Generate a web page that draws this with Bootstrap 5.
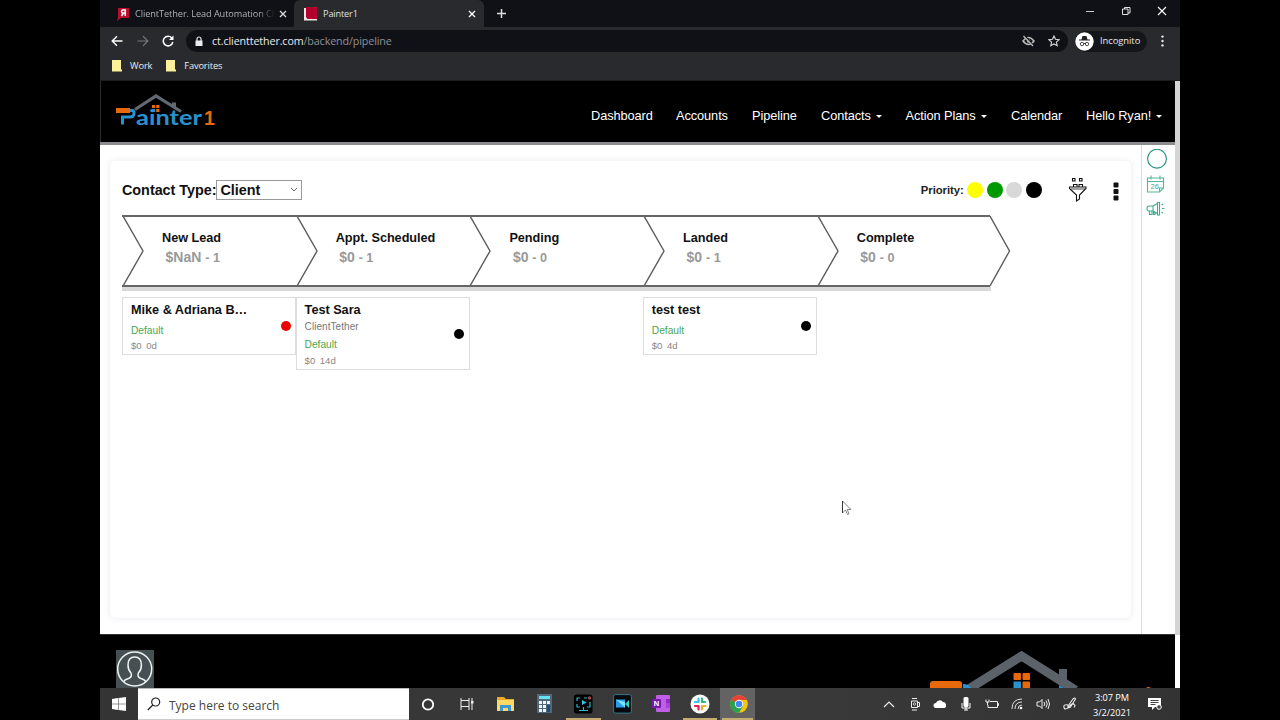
<!DOCTYPE html>
<html lang="en">
<head>
<meta charset="utf-8">
<meta name="viewport" content="width=device-width, initial-scale=1">
<title>Painter1</title>
<link href="https://cdn.jsdelivr.net/npm/bootstrap@5.3.0/dist/css/bootstrap.min.css" rel="stylesheet">
<style>
body{background:#000;height:720px;overflow:hidden;font-family:"Liberation Sans",Arial,sans-serif}
svg{display:block;flex:none}
.screen{width:1080px;height:720px;margin-left:100px}
.seg{font-family:"Open Sans","Noto Sans",sans-serif;color:#e8eaed;white-space:nowrap}
.tabstrip{height:27px;background:#101116;font-size:9.2px}
.tab-one{width:194px;padding-left:17px}
.tab-title{width:146px;letter-spacing:-.08px;color:#aeb1b6;padding-left:6px;-webkit-mask-image:linear-gradient(90deg,#000 88%,transparent)}
.tab-two{width:190px;background:#292a2e;border-radius:6px 6px 0 0;padding-left:10px;color:#dfe1e5;letter-spacing:-.15px}
.toolbar{height:28px;background:#292a2e}
.omnibox{width:882px;height:22px;border-radius:11px;background:#101116;font-size:10.7px;letter-spacing:-.1px;padding:0 8px 0 8px}
.omnibox .path{color:#8f9297}
.incog{width:72px;height:21px;border-radius:11px;background:#15161a;font-size:9.4px;letter-spacing:-.05px}
.marks{height:26px;background:#292a2e;border-bottom:1px solid #1b1c1f;font-size:9.3px;padding-bottom:3px;letter-spacing:-.15px}
.page{height:607px}
.site{width:1075px}
.vscroll{width:5px;height:554px;background:#d5d5d5}
.vscroll-end{width:5px;height:53px;background:#fff}
.topnav{height:61px;background:#000;border-left:1px solid #2a2a2a}
.menu{display:grid;grid-template-columns:85px 76px 69px 84.5px 105.5px 75px 80px;width:575px;color:#fff;font-size:12.8px;letter-spacing:-.09px;padding-top:8px;line-height:18px;white-space:nowrap}
.caret{display:inline-block;border:3px solid transparent;border-top-color:#fff;border-bottom:0;margin-left:5px;vertical-align:2px}
.rule{height:3px;background:#8b8c8f}
.body-area{height:489px;background:#fff}
.main-area{width:1041px;padding:16px 10px 16px 10px}
.panel{height:457px;border-radius:5px;box-shadow:0 0 6px rgba(70,80,140,.13);padding:17px 0 0 12px;background:#fff}
.side{width:34px;border-left:1px solid #d9dfe0;padding:4px 0 0 4px}
.filters{height:24px}
.ctype{font-size:14.4px;font-weight:700;letter-spacing:-.03px;color:#111;white-space:nowrap}
.picker{width:86px;height:20px;border:1px solid #999;padding:0 3px;line-height:18px}
.prio{font-size:11.3px;font-weight:700;letter-spacing:-.05px;width:46px;color:#222;white-space:nowrap}
.dot{width:16px;height:16px;border-radius:50%;margin-right:3.8px}
.stages{margin-top:13px;height:72px}
.stage{width:173.7px;border-top:2px solid #666;border-bottom:2px solid #666}
.stage-text{padding:12px 0 0 18px;white-space:nowrap}
.stage-name{font-size:12.7px;line-height:18px;font-weight:700;color:#111;letter-spacing:-.03px}
.stage-sum{font-size:14px;line-height:20px;font-weight:700;color:#999;padding-left:3.5px}
.stage-sum span{font-size:12.6px}
.under{width:869px;height:4px;background:#d9d9d9}
.deals{margin-top:6px}
.slot{width:173.6px}
.deal{border:1px solid #ddd;padding:3px 4.500px 0 8px;height:58px;white-space:nowrap;width:174px}
.deal.tall{height:73px}
.deal-name{font-size:12.7px;font-weight:700;color:#111;line-height:18px;letter-spacing:-.02px}
.deal-org{font-size:10px;line-height:15px;color:#777;letter-spacing:.06px}
.deal-tag{font-size:10.2px;line-height:16px;color:#4ba64f;margin-top:4px}
.tall .deal-tag{margin-top:1px;line-height:20px}
.tall .deal-sum{line-height:12px}
.deal-sum{font-size:9.6px;line-height:14px;color:#888}
.deal-sum span{margin-left:4.500px}
.flag{width:10px;height:10px;border-radius:50%;margin-bottom:3px}
.foot{height:54px;background:#000;border-top:1px solid #333;padding:15px 0 0 16px}
.taskbar{height:32px;background:linear-gradient(90deg,#333433,#3a3a3a 60%,#333)}
.searchbox{width:271px;height:32px;background:#fff;color:#444;border-bottom:1px solid #ccc;font-size:12px;padding-left:9px;border-top:1px solid #bbb}
.app{width:38.8px;height:32px;display:flex;align-items:center;justify-content:center;flex:none}
.app.open{border-bottom:2px solid #c0a768;padding:2px 3px 0;border-image:linear-gradient(90deg,transparent 8%,#c6ac70 8%,#c6ac70 92%,transparent 92%) 1}
.app.now{background:#636363;width:35px;padding:2px 0 0 2px;margin-left:1px}
.tray-cell{width:25.6px;display:flex;justify-content:center;flex:none;padding-left:1px}
.clock{font-size:9.2px;letter-spacing:-.05px;line-height:15px;text-align:center;width:58px;margin-left:-1px;padding-top:1px;color:#fff}
</style>
</head>
<body>
<div class="screen d-flex flex-column">
  <div class="tabstrip seg d-flex flex-none">
    <div class="tab-one d-flex align-items-center">
      <svg width="12" height="14" viewBox="0 0 12 14"><path d="M1 1h11v10H4l-4 3 1-4z" fill="#b80f2e"/><path d="M8.300 9V3H6a1.500 1.500 0 0 0 0 3h2M6.500 6 4.500 9" stroke="#fff" stroke-width="1.500" fill="none"/></svg>
      <div class="tab-title">ClientTether. Lead Automation CF</div>
      <svg style="margin-left:4px" width="8" height="8" viewBox="0 0 8 8"><path d="m1 1 6 6M7 1 1 7" stroke="#ddd" stroke-width="1.300"/></svg>
    </div>
    <div class="tab-two d-flex align-items-center">
      <svg width="14" height="14" viewBox="0 0 14 14"><path d="M0 1h3v10h10v2.500H0z" fill="#f3e4e6"/><path d="M2 0h11v12H3.500L2 10z" fill="#b3002d"/></svg>
      <span style="margin-left:5px">Painter1</span>
      <svg class="ms-auto" style="margin-right:8px" width="8" height="8" viewBox="0 0 8 8"><path d="m1 1 6 6M7 1 1 7" stroke="#fff" stroke-width="1.400"/></svg>
    </div>
    <svg class="align-self-center" style="margin-left:12px" width="11" height="11" viewBox="0 0 11 11"><path d="M5.500 1v9M1 5.500h9" stroke="#ddd" stroke-width="1.500"/></svg>
    <div class="ms-auto d-flex align-items-center" style="gap:26px;padding-right:13px;padding-bottom:5px">
      <svg width="10" height="10" viewBox="0 0 10 10"><path d="M1 5.500h8" stroke="#ccc"/></svg>
      <svg width="10" height="10" viewBox="0 0 10 10"><path d="M1.500 3h5.500v5.500H1.500zM3.500 3V1.500H9V7H7" stroke="#e2e2e2" fill="none"/></svg>
      <svg width="10" height="10" viewBox="0 0 10 10"><path d="m1 1 8 8M9 1 1 9" stroke="#fff" stroke-width="1.100"/></svg>
    </div>
  </div>
  <div class="toolbar seg d-flex align-items-center">
    <svg style="margin-left:11px" width="12" height="12" viewBox="0 0 12 12"><path d="M11.500 6H1.500M6 1.200 1.200 6 6 10.800" fill="none" stroke="#fff" stroke-width="1.400"/></svg>
    <svg style="margin-left:14px" width="12" height="12" viewBox="0 0 12 12"><path d="M.5 6h10M6 1.200 10.800 6 6 10.800" fill="none" stroke="#77797d" stroke-width="1.200"/></svg>
    <svg style="margin:0 12px 0 13px" width="12" height="12" viewBox="0 0 12 12"><path d="M9.800 3A4.800 4.800 0 1 0 10.800 7" fill="none" stroke="#fff" stroke-width="1.500"/><path d="M11.500.5v4.500H7z" fill="#fff"/></svg>
    <div class="omnibox d-flex align-items-center">
      <svg width="10" height="11" viewBox="0 0 10 11"><path d="M1.500 4.500h7V10h-7z" fill="#e8eaed"/><path d="M3 5V3a2 2 0 0 1 4 0v2" fill="none" stroke="#e8eaed" stroke-width="1.200"/></svg>
      <div style="margin-left:8px">ct.clienttether.com<span class="path">/backend/pipeline</span></div>
      <svg class="ms-auto" width="13" height="12" viewBox="0 0 13 12"><path d="M1 6q5.500-7 11 0-5.500 7-11 0z" fill="none" stroke="#bbb" stroke-width="1.500"/><circle cx="6.500" cy="6" r="1.800" fill="#bbb"/><path d="m2.500 1 9 10" stroke="#101116" stroke-width="2"/><path d="m1.500 1 9.500 10" stroke="#bbb" stroke-width="1.300"/></svg>
      <svg style="margin-left:13px" width="12" height="12" viewBox="0 0 12 12"><path d="m6 1 1.500 3.300 3.600.4-2.700 2.400.8 3.600L6 8.900l-3.200 1.800.8-3.600L.9 4.700l3.600-.4z" fill="none" stroke="#d6d7d9" stroke-width="1.100"/></svg>
    </div>
    <div class="incog d-flex align-items-center" style="margin-left:7px">
      <svg width="19" height="19" viewBox="0 0 19 19"><circle cx="9.500" cy="9.500" r="9.200" fill="#fff"/><path d="M6.500 7.500 7.500 4h4l1 3.500zM4 7.500h11v1H4z" fill="#222"/><circle cx="7" cy="12" r="1.700" fill="none" stroke="#222" stroke-width=".8"/><circle cx="12" cy="12" r="1.700" fill="none" stroke="#222" stroke-width=".8"/><path d="M8.500 11.500h2" stroke="#222" stroke-width=".8"/></svg>
      <span style="margin-left:6px">Incognito</span>
    </div>
    <svg style="margin-left:14px" width="4" height="12" viewBox="0 0 4 12"><g fill="#e8eaed"><circle cx="1.500" cy="1.600" r="1.200"/><circle cx="1.500" cy="6" r="1.200"/><circle cx="1.500" cy="10.400" r="1.200"/></g></svg>
  </div>
  <div class="marks seg d-flex align-items-center">
    <svg style="margin-left:12px" width="11" height="12" viewBox="0 0 11 12"><path d="M0 0h9v9l1 1v1.500H0z" fill="#fdf09a"/></svg>
    <span style="margin-left:7px">Work</span>
    <svg style="margin-left:14px" width="11" height="12" viewBox="0 0 11 12"><path d="M0 0h9v9l1 1v1.500H0z" fill="#fdf09a"/></svg>
    <span style="margin-left:7px">Favorites</span>
  </div>

  <div class="page d-flex">
    <div class="site">
      <nav class="topnav d-flex justify-content-between align-items-center">
        <svg style="margin:-2px 0 0 14px" width="102" height="36" viewBox="0 0 102 36">
          <path d="M20 16.500 41 3l25 15.500" fill="none" stroke="#636970" stroke-width="3.200"/>
          <path d="M57 9.500h4v7l-4-3z" fill="#636970"/>
          <path d="M1 15h14v5H1z" fill="#e8690b"/>
          <path d="M15 17.500h2.500q1.500 0 1.500 2.500 0 4-4 4H7.500v7.500" fill="none" stroke="#2a91d0" stroke-width="3"/>
          <path d="M37 12h3.200v3H37zM41.200 12h3.200v3h-3.200zM41.200 16h3.200v3h-3.200z" fill="#e8690b"/><path d="M37 16h3.200v3H37z" fill="#2a91d0"/>
          <text x="21" y="31.500" textLength="66" lengthAdjust="spacingAndGlyphs" font-family="Lato,sans-serif" font-weight="700" font-size="20.500" fill="#2a91d0">ainter</text>
          <text x="89" y="31.500" font-family="Liberation Sans,sans-serif" font-weight="700" font-size="19.500" fill="#e8690b">1</text>
        </svg>
        <div class="menu" style="margin-right:9px">
          <span>Dashboard</span><span>Accounts</span><span>Pipeline</span><span>Contacts<i class="caret"></i></span><span>Action Plans<i class="caret"></i></span><span>Calendar</span><span>Hello Ryan!<i class="caret"></i></span>
        </div>
      </nav>
      <div class="rule"></div>
      <div class="body-area d-flex">
        <main class="main-area">
          <div class="panel">
            <div class="filters d-flex align-items-center">
              <div class="ctype d-flex align-items-center"><span style="padding-top:1px">Contact Type:</span>
                <div class="picker d-flex align-items-center justify-content-between">Client<svg width="8" height="6" viewBox="0 0 8 6"><path d="m1 1 3 3 3-3" fill="none" stroke="#666"/></svg></div>
              </div>
              <div class="d-flex align-items-center ms-auto">
                <div class="prio">Priority:</div>
                <div class="dot" style="background:#ff0"></div><div class="dot" style="background:#090"></div><div class="dot" style="background:#d8d8d8"></div><div class="dot" style="background:#000"></div>
                <svg style="margin-left:22px" width="20" height="26" viewBox="0 0 20 26"><g fill="none" stroke="#111" stroke-width="1.100"><path d="M4.500 1.500h2.500v2.500H4.500zM11.500 1.500h2.500v2.500H11.500zM5.500 10V7.500H9V10M11 10V7.500h3.500V10M1.500 10h16.500v1.500L11.500 18v4l-3 2v-6L1.500 11.500z"/><path d="M3 12h14" stroke-width=".8"/></g></svg>
                <svg style="margin:3px 12px 0 25px" width="6" height="20" viewBox="0 0 6 20"><g fill="#111"><rect x=".5" y=".5" width="5" height="5" rx="1"/><rect x=".5" y="7" width="5" height="5" rx="1"/><rect x=".5" y="13.500" width="5" height="5" rx="1"/></g></svg>
              </div>
            </div>
            <div class="stages d-flex">
              <div class="stage d-flex"><svg width="22" height="68" viewBox="0 0 22 68"><path d="m1-1 20 35L1 69" fill="none" stroke="#5c5c5c" stroke-width="1.400"/></svg><div class="stage-text"><div class="stage-name">New Lead</div><div class="stage-sum">$NaN <span>- 1</span></div></div></div>
              <div class="stage d-flex"><svg width="22" height="68" viewBox="0 0 22 68"><path d="m1-1 20 35L1 69" fill="none" stroke="#5c5c5c" stroke-width="1.400"/></svg><div class="stage-text"><div class="stage-name">Appt. Scheduled</div><div class="stage-sum">$0 <span>- 1</span></div></div></div>
              <div class="stage d-flex"><svg width="22" height="68" viewBox="0 0 22 68"><path d="m1-1 20 35L1 69" fill="none" stroke="#5c5c5c" stroke-width="1.400"/></svg><div class="stage-text"><div class="stage-name">Pending</div><div class="stage-sum">$0 <span>- 0</span></div></div></div>
              <div class="stage d-flex"><svg width="22" height="68" viewBox="0 0 22 68"><path d="m1-1 20 35L1 69" fill="none" stroke="#5c5c5c" stroke-width="1.400"/></svg><div class="stage-text"><div class="stage-name">Landed</div><div class="stage-sum">$0 <span>- 1</span></div></div></div>
              <div class="stage d-flex"><svg width="22" height="68" viewBox="0 0 22 68"><path d="m1-1 20 35L1 69" fill="none" stroke="#5c5c5c" stroke-width="1.400"/></svg><div class="stage-text"><div class="stage-name">Complete</div><div class="stage-sum">$0 <span>- 0</span></div></div></div>
              <svg width="22" height="72" viewBox="0 0 22 72"><path d="m0 1 19.500 35L0 71" fill="none" stroke="#5c5c5c" stroke-width="1.400"/></svg>
            </div>
            <div class="under"></div>
            <div class="deals d-flex">
              <div class="slot"><div class="deal d-flex justify-content-between align-items-center"><div class="align-self-start"><div class="deal-name">Mike &amp; Adriana B…</div><div class="deal-tag">Default</div><div class="deal-sum">$0<span>0d</span></div></div><div class="flag" style="background:#e00"></div></div></div>
              <div class="slot"><div class="deal tall d-flex justify-content-between align-items-center"><div class="align-self-start"><div class="deal-name">Test Sara</div><div class="deal-org">ClientTether</div><div class="deal-tag">Default</div><div class="deal-sum">$0<span>14d</span></div></div><div class="flag" style="background:#000"></div></div></div>
              <div class="slot"></div>
              <div class="slot"><div class="deal d-flex justify-content-between align-items-center"><div class="align-self-start"><div class="deal-name">test test</div><div class="deal-tag">Default</div><div class="deal-sum">$0<span>4d</span></div></div><div class="flag" style="background:#000"></div></div></div>
            </div>
          </div>
        </main>
        <aside class="side">
          <svg width="22" height="20" viewBox="0 0 22 20"><circle cx="11" cy="9.700" r="9.400" fill="none" stroke="#278f7d" stroke-width="1.100"/></svg>
          <svg style="margin-top:6px" width="20" height="18" viewBox="0 0 20 18"><g fill="none" stroke="#55b59a" stroke-width="1.100"><path d="M1.500 3h16v10l-4 4h-12zM1.500 6.500h16M5 .5v4M14 .5v4M13.500 17v-4h4"/></g><text x="4.500" y="14" font-size="7.500" font-family="Liberation Sans,sans-serif" fill="#3faa8c">26</text></svg>
          <svg style="margin-top:8px" width="20" height="16" viewBox="0 0 20 16"><g fill="none" stroke="#3fae8e" stroke-width="1.100"><path d="M3 5h4v5H3q-2 0-2-2.500T3 5zM7 5l4.500-2.500v10L7 10M11.500 1.500h2v12.500h-2zM3.500 10v3.500H6V10M7.500 10.500v3H9v-2.500"/><path d="m15.500 4 1.500-1M16 7.500h2.500M15.500 11l1.500 1"/></g></svg>
        </aside>
      </div>
      <footer class="foot d-flex">
        <svg width="38" height="38" viewBox="0 0 38 38"><path fill="#465053" d="M0 0h38v38H0z"/><g fill="none" stroke="#eef2f3" stroke-width="1.500"><circle cx="18.700" cy="19" r="17"/><path d="M7.500 32q1-2.500 5-3.500 4-1.500 2.500-5.500-3-3-3-8 0-8 6.700-8t6.700 8q0 5-3 8-1.500 4 2.500 5.500 4 1 5 3.500"/></g></svg>
        <svg style="margin-left:775px" width="226" height="38" viewBox="0 0 226 38"><path d="m38 40 54.500-34 54 34" fill="none" stroke="#5b6269" stroke-width="9"/><path d="M130 19h8v17l-8-6z" fill="#5b6269"/><path d="M1 34q0-3 3-3h26q3 0 3 3v5H1z" fill="#e8690b"/><path d="M34 38v-4q6 0 9 5z" fill="#2a91d0"/><g fill="#e8690b"><rect x="84.500" y="23" width="7.500" height="7" rx="1"/><rect x="93.500" y="23" width="7.500" height="7" rx="1"/><rect x="93.500" y="31.500" width="7.500" height="8" rx="1"/><path d="M217 38q2-2 5 0z"/></g><path d="M84.500 31.500H92v7h-7.500zM130 35l5 3h-5z" fill="#2a91d0"/></svg>
      </footer>
    </div>
    <div><div class="vscroll"></div><div class="vscroll-end"></div></div>
  </div>

  <div class="taskbar seg d-flex align-items-center">
    <div class="d-flex justify-content-center" style="width:38px"><svg width="14" height="14" viewBox="0 0 14 14"><path d="M0 2 6 1v5.700H0zM6.500 1 14 0v6.700H6.500zM0 7.300h6V13l-6-1zM6.500 7.300H14V14l-7.500-1z" fill="#fff"/></svg></div>
    <div class="searchbox d-flex align-items-center"><svg width="14" height="14" viewBox="0 0 14 14"><circle cx="8.700" cy="5" r="4" fill="none" stroke="#222" stroke-width="1.200"/><path d="m5.800 8-5 5" stroke="#222" stroke-width="1.200"/></svg><span style="margin-left:8px;padding-top:3px">Type here to search</span></div>
    <div class="app"><svg width="14" height="14" viewBox="0 0 14 14"><circle cx="7" cy="7.500" r="5.200" fill="none" stroke="#fff" stroke-width="1.800"/></svg></div>
    <div class="app"><svg width="14" height="14" viewBox="0 0 14 14"><g fill="none" stroke="#eee"><path d="M1 1v2.500h8V1M1 3.500v6h8v-6M1 13v-3.500h8V13M12 1v12"/></g><path d="M11 4h2.500v2.500H11z" fill="#eee"/></svg></div>
    <div class="app"><svg width="18" height="16" viewBox="0 0 18 16"><path d="M0 1h7l2 2h8v12H0z" fill="#e9aa27"/><path d="M0 4h17v11H0z" fill="#ffda62"/><path d="M3 15V9h11v6h-3v-3H6v3z" fill="#3d96d5"/></svg></div>
    <div class="app"><svg width="16" height="20" viewBox="0 0 16 20"><path d="M0 0h15v19H0z" fill="#52687b"/><path d="M2 2h11v3H2z" fill="#65e3f5"/><g fill="#eef3f7"><path d="M2 7h3v3H2zM6 7h3v3H6zM10 7h3v3h-3zM2 11h3v3H2zM6 11h3v3H6zM2 15h3v3H2zM6 15h3v3H6z"/></g><path d="M10 11h3v7h-3z" fill="#174f80"/></svg></div>
    <div class="app open"><svg width="19" height="20" viewBox="0 0 19 20"><rect width="18.500" height="19" y=".5" rx="2.500" fill="#000"/><g fill="none" stroke="#31b6ca" stroke-width="1.200"><path d="M6 4H3v3M10 4h3M3 10v3h3M16 8v5h-3M9.500 13v3M5 16.500h9"/></g><path d="m8 6 4.500 2.500L8 11z" fill="#33c5dc"/><circle cx="15.500" cy="4" r="1.700" fill="#a84444"/></svg></div>
    <div class="app"><svg width="19" height="20" viewBox="0 0 19 20"><rect x=".6" y=".6" width="17.800" height="18.500" rx="2" fill="#04090d" stroke="#38798a"/><path d="M3 5.500h9v8H3z" fill="#279df0"/><path d="m12 10 4-4v8z" fill="#35d2bc"/><path d="m3 5.500 9 8V8z" fill="#7ee1ff"/></svg></div>
    <div class="app"><svg width="18" height="18" viewBox="0 0 18 18"><rect x="4" width="14" height="17" rx="1" fill="#c15ee8"/><path d="M14 4h4v4h-4z" fill="#8c2dc2"/><path d="M14 8h4v5h-4z" fill="#aa43d8"/><rect y="4" width="9" height="9" rx="1" fill="#7719aa"/><text x="1.800" y="11.200" font-family="Liberation Sans,sans-serif" font-size="7.500" font-weight="700" fill="#fff">N</text></svg></div>
    <div class="app open"><svg width="20" height="20" viewBox="0 0 20 20"><circle cx="10" cy="10" r="9.500" fill="#fff"/><g fill="none" stroke-width="2.200" stroke-linecap="round"><path d="M8.500 4.500v3.500H5" stroke="#36c5f0"/><path d="M12 8V4.500M12 8h3" stroke="#2eb67d"/><path d="M12 12h3.500M12 12v3.500" stroke="#ecb22e"/><path d="M8.500 12v3.500M5 12h3" stroke="#e01e5a"/></g></svg></div>
    <div class="app open now"><svg width="18" height="18" viewBox="0 0 18 18"><circle cx="9" cy="9" r="8.800" fill="#f9c513"/><path d="M9 9 1.300 4.600A8.800 8.800 0 0 0 9 17.800l4-6.600z" fill="#28a151"/><path d="M9 9 1.300 4.700A8.800 8.800 0 0 1 16.800 5H9z" fill="#e64335"/><circle cx="9" cy="9" r="4.200" fill="#fff"/><circle cx="9" cy="9" r="3.300" fill="#4587ef"/></svg></div>
    <div class="d-flex align-items-center ms-auto" style="padding-right:18px">
      <div class="tray-cell"><svg width="12" height="8" viewBox="0 0 12 8"><path d="m1 7 5-5 5 5" fill="none" stroke="#eee" stroke-width="1.100"/></svg></div>
      <div class="tray-cell"><svg width="12" height="14" viewBox="0 0 12 14"><path d="M2.500 4h6v6.500h-6zM8.500 5.500h2v4h-2M3 1.500h5M3 13h5" fill="none" stroke="#eee"/><circle cx="5.500" cy="7" r="1.200" fill="none" stroke="#eee" stroke-width=".8"/></svg></div>
      <div class="tray-cell"><svg width="14" height="10" viewBox="0 0 14 10"><path d="M3 9a2.500 2.500 0 0 1 0-5 4 4 0 0 1 7-1 3.200 3.200 0 0 1 1.500 6z" fill="#fff"/></svg></div>
      <div class="tray-cell"><svg width="10" height="14" viewBox="0 0 10 14"><rect x="2.500" width="5" height="10" rx="1.500" fill="#fff"/><path d="M1 6v5h8V6M5 10v3M3 13h4" fill="none" stroke="#fff"/></svg></div>
      <div class="tray-cell"><svg width="14" height="10" viewBox="0 0 14 10"><path d="M5 2.500h7.500v6H3V6M12.500 4.500h1v2h-1M1 .5v2.500h3V.5M2.500 3v3" fill="none" stroke="#eee"/></svg></div>
      <div class="tray-cell"><svg width="12" height="12" viewBox="0 0 12 12"><path d="M1 11Q1 1 11 1M4 11q0-7 7-7M7 11q0-4 4-4" fill="none" stroke="#ddd"/><circle cx="10" cy="10" r="1.300" fill="#fff"/></svg></div>
      <div class="tray-cell"><svg width="14" height="12" viewBox="0 0 14 12"><path d="M1 4h2.500L6 1.500v9L3.500 8H1zM8 4q1.500 2 0 4M10 2.500q2.500 3.500 0 7M12 1q3 5 0 10" fill="none" stroke="#eee"/></svg></div>
      <div class="tray-cell" style="width:29px"><svg width="14" height="14" viewBox="0 0 14 14"><path d="m5 9 5-7q2-2 2.500 0L7.500 10 5 11zM5 8Q0 7 1 10.500t5-1 5-2q2 .5 0 3" fill="none" stroke="#eee" stroke-width="1.100"/></svg></div>
      <div class="clock">3:07 PM<br>3/2/2021</div>
      <svg style="margin-left:7px" width="14" height="14" viewBox="0 0 14 14"><path d="M0 1h13v9H7l-3 3v-3H0z" fill="#fff"/><path d="M2.500 3.500h8M2.500 5.500h8M2.500 7.500h5" stroke="#444"/><circle cx="11" cy="10" r="2.300" fill="#444" stroke="#fff"/></svg>
    </div>
  </div>
</div>
<!-- mouse pointer -->
<svg class="position-absolute" style="left:841px;top:500px" width="11" height="16" viewBox="0 0 11 16"><path d="M1.500 1v12l3-3 2 4.500 1.500-.7L6.200 9.500H10z" fill="#fff" stroke="#777" stroke-width=".9"/><path d="M1.500 1v12" stroke="#333"/></svg>
</body>
</html>
